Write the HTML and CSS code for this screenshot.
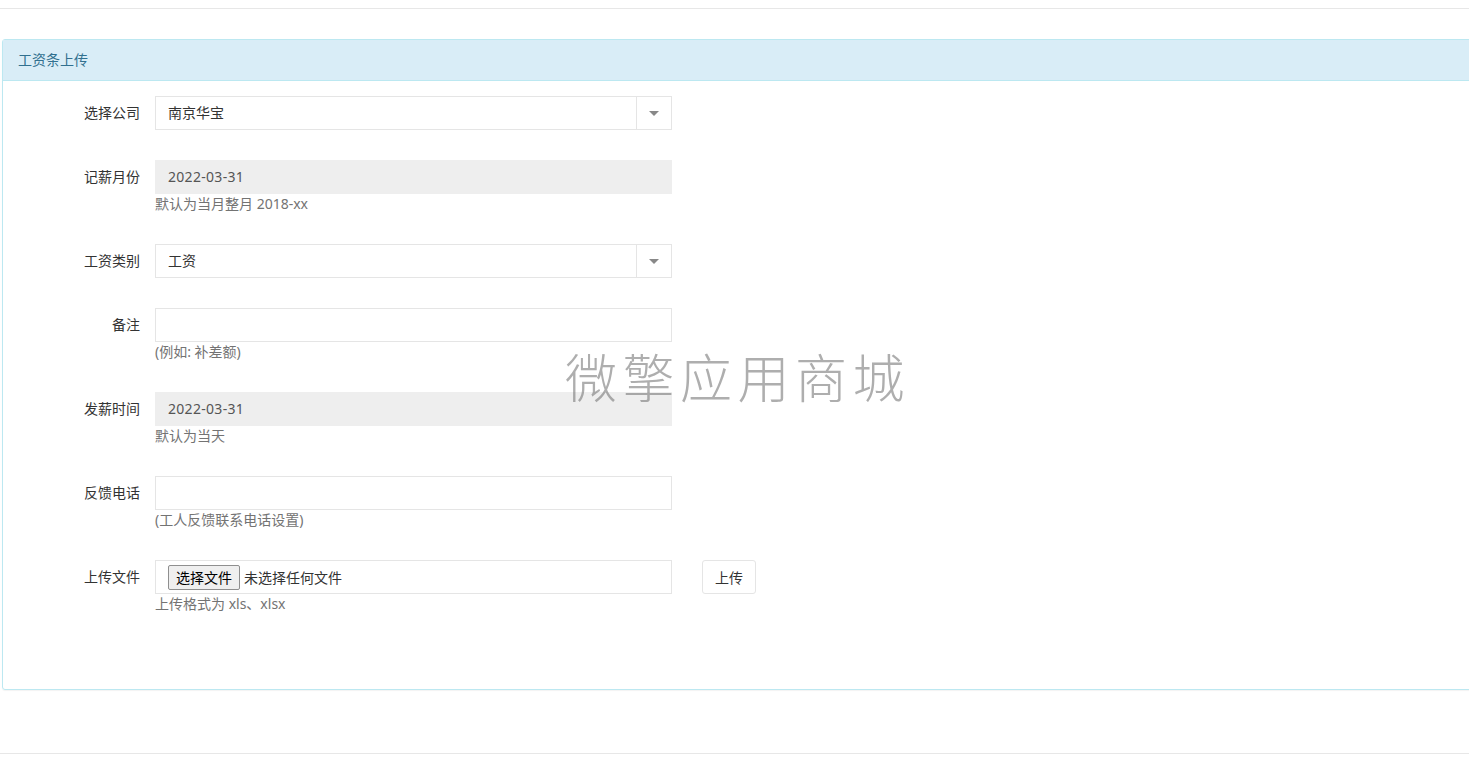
FILE: index.html
```html
<!DOCTYPE html>
<html lang="zh-CN">
<head>
<meta charset="utf-8">
<title>工资条上传</title>
<link rel="stylesheet" href="styles.css">
</head>
<body>
<div class="topbar"></div>
<div class="page">
  <div class="panel">
    <div class="panel-heading">工资条上传</div>
    <div class="panel-body">
      <div class="form-group">
        <label class="label">选择公司</label>
        <div class="field">
          <div class="select">
            <span class="select-value">南京华宝</span>
            <span class="select-arrow"><span class="caret"></span></span>
          </div>
        </div>
      </div>
      <div class="form-group">
        <label class="label">记薪月份</label>
        <div class="field">
          <div class="input disabled">2022-03-31</div>
          <div class="help">默认为当月整月 2018-xx</div>
        </div>
      </div>
      <div class="form-group">
        <label class="label">工资类别</label>
        <div class="field">
          <div class="select">
            <span class="select-value">工资</span>
            <span class="select-arrow"><span class="caret"></span></span>
          </div>
        </div>
      </div>
      <div class="form-group">
        <label class="label">备注</label>
        <div class="field">
          <div class="input"></div>
          <div class="help">(例如: 补差额)</div>
        </div>
      </div>
      <div class="form-group">
        <label class="label">发薪时间</label>
        <div class="field">
          <div class="input disabled">2022-03-31</div>
          <div class="help">默认为当天</div>
        </div>
      </div>
      <div class="form-group">
        <label class="label">反馈电话</label>
        <div class="field">
          <div class="input"></div>
          <div class="help">(工人反馈联系电话设置)</div>
        </div>
      </div>
      <div class="form-group">
        <label class="label">上传文件</label>
        <div class="field">
          <div class="input file">
            <span class="file-btn">选择文件</span>
            <span class="file-text">未选择任何文件</span>
          </div>
          <div class="help">上传格式为 xls、xlsx</div>
        </div>
        <div class="action">
          <button class="btn">上传</button>
        </div>
      </div>
    </div>
  </div>
  <div class="watermark">微擎应用商城</div>
</div>
<div class="bottombar"></div>
</body>
</html>
```
FILE: styles.css
```css
html, body {
  margin: 0;
  padding: 0;
  background: #fff;
}
body {
  font-family: "Noto Sans", "Noto Sans CJK SC", sans-serif;
  font-size: 14px;
  color: #333;
  width: 1469px;
  height: 758px;
  overflow: hidden;
  position: relative;
}
.topbar {
  height: 8px;
  border-bottom: 1px solid #e7e7e7;
}
.page {
  padding: 30px 0 0 2px;
  height: 714px;
  box-sizing: border-box;
}
.panel {
  width: 1480px;
  height: 651px;
  box-sizing: border-box;
  border: 1px solid #bce8f1;
  border-radius: 3px;
  box-shadow: 0 1px 1px rgba(0,0,0,0.05);
}
.panel-heading {
  height: 41px;
  box-sizing: border-box;
  background: #d9edf7;
  border-bottom: 1px solid #bce8f1;
  color: #31708f;
  padding: 0 15px;
  line-height: 39px;
  font-size: 14px;
}
.panel-body {
  padding: 15px 0 0 0;
  display: flex;
  flex-direction: column;
  gap: 30px;
}
.form-group {
  display: flex;
  align-items: flex-start;
}
.label {
  width: 137px;
  text-align: right;
  padding-right: 15px;
  line-height: 34px;
  height: 34px;
  font-size: 14px;
  color: #333;
}
.field {
  width: 517px;
}
.input, .select {
  height: 34px;
  box-sizing: border-box;
  border: 1px solid #e5e5e5;
  background: #fff;
  padding: 0 12px;
  line-height: 32px;
  color: #555;
  font-size: 14px;
}
.input.disabled {
  background: #eee;
  border-color: #eee;
  letter-spacing: 0.3px;
}
.select {
  display: flex;
  padding: 0;
}
.select-value {
  flex: 1;
  padding: 0 12px;
  font-size: 14px;
  color: #333;
}
.select-arrow {
  width: 34px;
  border-left: 1px solid #e5e5e5;
  display: flex;
  align-items: center;
  justify-content: center;
}
.caret {
  width: 0;
  height: 0;
  border-left: 5px solid transparent;
  border-right: 5px solid transparent;
  border-top: 5px solid #888;
}
.help {
  margin-top: 0;
  height: 20px;
  line-height: 20px;
  color: #737373;
  font-size: 14px;
  overflow: hidden;
}
.input.file {
  display: flex;
  align-items: center;
  padding: 1px 12px 0;
  font-size: 14px;
}
.file-btn {
  height: 25px;
  line-height: 23px;
  box-sizing: border-box;
  padding: 0 7px;
  border: 1px solid #8f8f8f;
  border-radius: 2px;
  background: #efefef;
  color: #000;
  font-size: 14px;
}
.file-text {
  margin-left: 4px;
  color: #333;
}
.action {
  padding-left: 30px;
}
.btn {
  height: 34px;
  width: 54px;
  box-sizing: border-box;
  border: 1px solid #e5e5e5;
  border-radius: 3px;
  background: #fff;
  color: #333;
  font-family: "Noto Sans CJK SC", sans-serif;
  font-size: 14px;
  padding: 0;
}
.bottombar {
  position: absolute;
  left: 0;
  right: 0;
  top: 753px;
  border-top: 1px solid #e7e7e7;
}
.watermark {
  position: absolute;
  left: 565px;
  top: 340px;
  font-size: 52px;
  letter-spacing: 5.5px;
  color: rgba(120,120,120,0.6);
  font-family: "Noto Sans CJK SC", sans-serif;
  font-weight: 300;
  line-height: 72px;
}
```
